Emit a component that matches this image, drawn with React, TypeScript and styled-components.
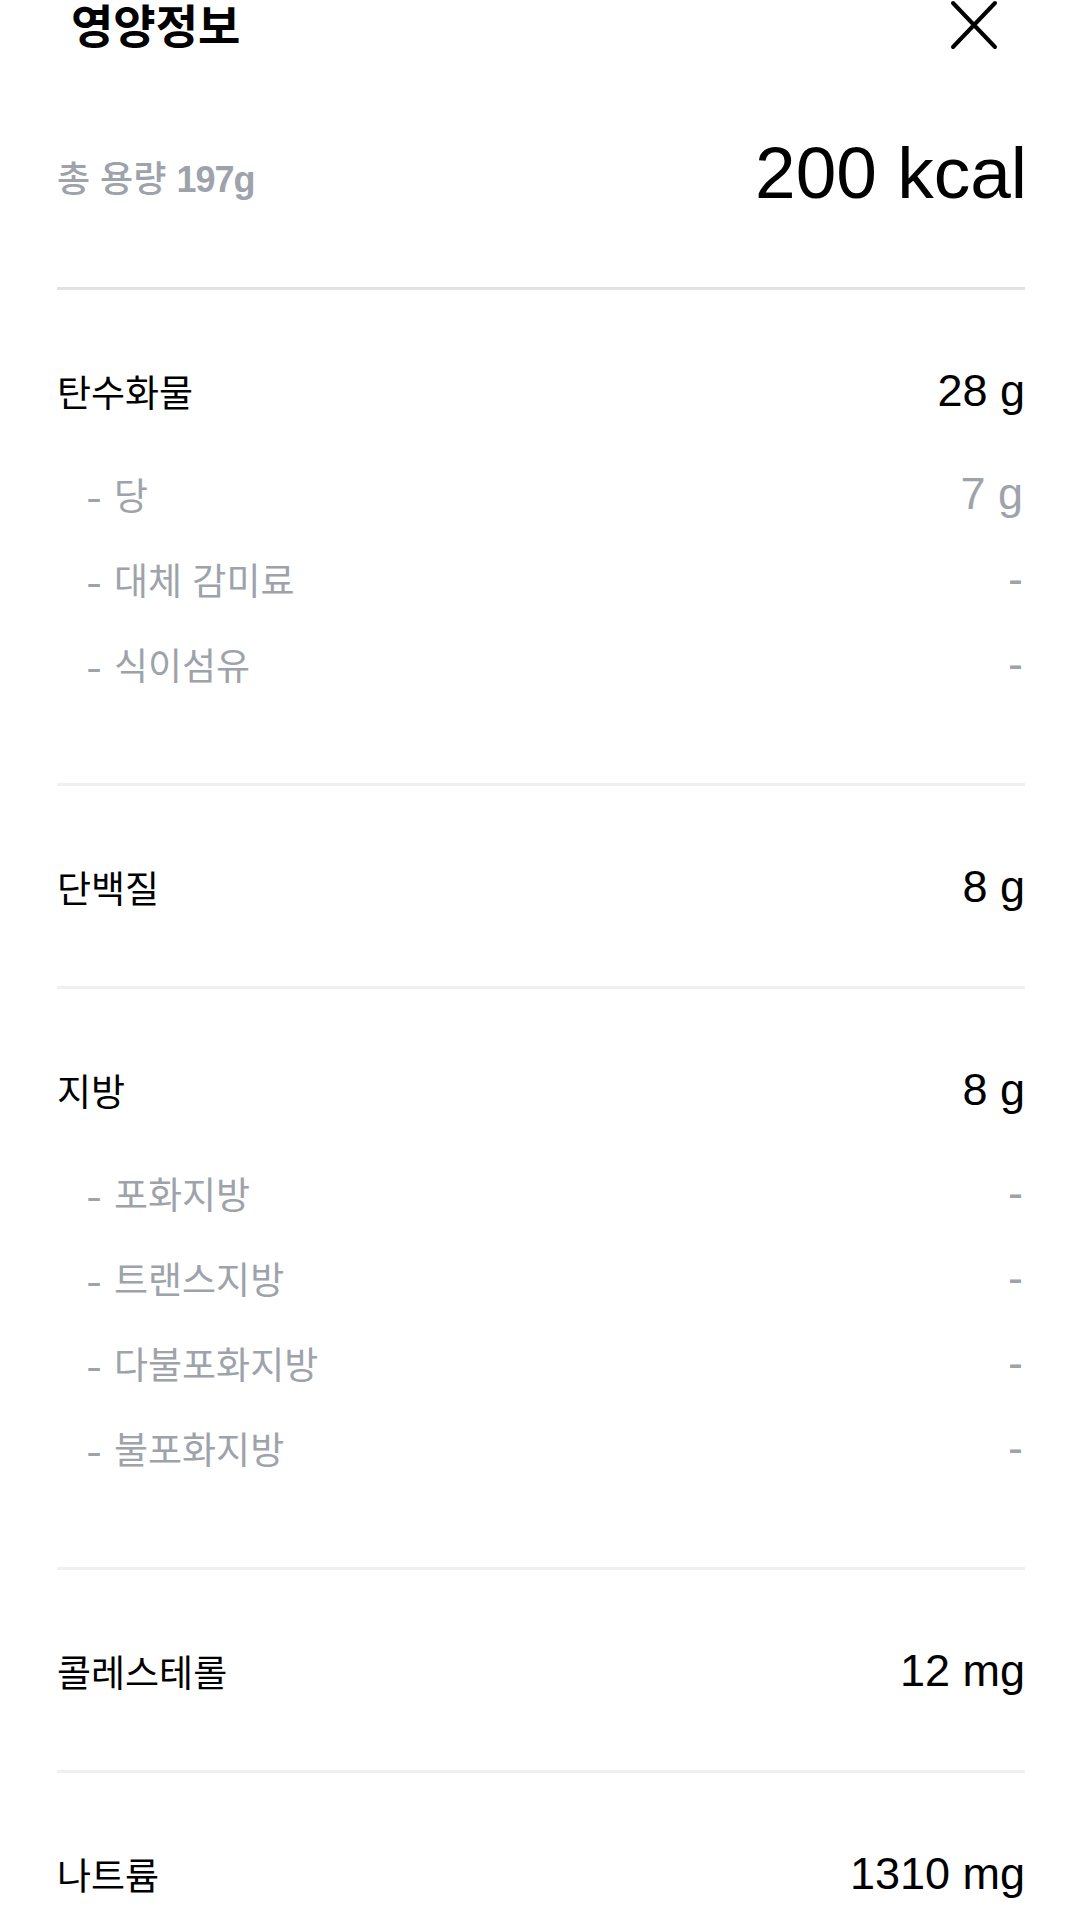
import styled, { createGlobalStyle } from "styled-components";

const GlobalStyle = createGlobalStyle`
  body {
    margin: 0;
    background: #ffffff;
    font-family: "Liberation Sans", "Noto Sans CJK KR", sans-serif;
    color: #000000;
  }
`;

const Page = styled.div`
  width: 1081px;
  display: flex;
  flex-direction: column;
`;

const Header = styled.div`
  height: 54px;
  display: flex;
  align-items: center;
  justify-content: space-between;
  padding: 0 83px 0 71px;
`;

const Title = styled.h1`
  margin: 0;
  font-size: 46px;
  line-height: 54px;
  font-weight: 700;
`;

const CloseButton = styled.button`
  width: 48px;
  height: 50px;
  padding: 0;
  border: none;
  background: none;
  display: flex;
  margin-top: -4px;
`;

const Content = styled.div`
  padding: 0 56px 0 57px;
  display: flex;
  flex-direction: column;
`;

const Summary = styled.div`
  display: flex;
  justify-content: space-between;
  align-items: flex-end;
  padding: 83px 0 78px;
`;

const TotalWeight = styled.div`
  font-size: 36px;
  line-height: 58px;
  font-weight: 500;
  color: #9ea3ab;
`;

const Grams = styled.span`
  font-weight: 700;
  letter-spacing: -1px;
`;

const Kcal = styled.div`
  font-size: 73px;
  line-height: 72px;
  margin-right: -2px;
`;

const Divider = styled.div<{ $strong?: boolean }>`
  height: 3px;
  background: ${(p) => (p.$strong ? "#dfe3e6" : "#eef0f2")};
`;

const Section = styled.div`
  padding: 41px 0 39px;
  display: flex;
  flex-direction: column;
`;

const MainRow = styled.div`
  height: 120px;
  display: flex;
  align-items: center;
  justify-content: space-between;
`;

const Label = styled.span`
  font-size: 37px;
`;

const Value = styled.span`
  font-size: 45px;
`;

const SubList = styled.div`
  display: flex;
  flex-direction: column;
  margin-bottom: 38px;
`;

const SubRow = styled.div`
  height: 85px;
  display: flex;
  align-items: center;
  justify-content: space-between;
  padding-left: 31px;
  color: #9ea3ab;
`;

const Dash = styled.span`
  display: inline-block;
  font-size: 36px;
  margin-right: 14px;
  transform: scaleX(1.3);
`;

const SubValue = styled.span`
  font-size: 45px;
  margin-right: 2px;
`;

interface INutrient {
  label: string;
  value: string;
  subs?: [string, string][];
}

const nutrients: INutrient[] = [
  {
    label: "탄수화물",
    value: "28 g",
    subs: [
      ["당", "7 g"],
      ["대체 감미료", "-"],
      ["식이섬유", "-"],
    ],
  },
  { label: "단백질", value: "8 g" },
  {
    label: "지방",
    value: "8 g",
    subs: [
      ["포화지방", "-"],
      ["트랜스지방", "-"],
      ["다불포화지방", "-"],
      ["불포화지방", "-"],
    ],
  },
  { label: "콜레스테롤", value: "12 mg" },
  { label: "나트륨", value: "1310 mg" },
];

function CloseIcon() {
  return (
    <svg width="48" height="50" viewBox="0 0 48 50" fill="none">
      <path
        d="M3 3L45 47M45 3L3 47"
        stroke="#000"
        strokeWidth="4"
        strokeLinecap="round"
      />
    </svg>
  );
}

function App() {
  return (
    <Page>
      <GlobalStyle />
      <Header>
        <Title>영양정보</Title>
        <CloseButton aria-label="닫기">
          <CloseIcon />
        </CloseButton>
      </Header>
      <Content>
        <Summary>
          <TotalWeight>
            총 용량 <Grams>197g</Grams>
          </TotalWeight>
          <Kcal>200 kcal</Kcal>
        </Summary>
        {nutrients.map((item, i) => (
          <div key={item.label}>
            <Divider $strong={i === 0} />
            <Section>
              <MainRow>
                <Label>{item.label}</Label>
                <Value>{item.value}</Value>
              </MainRow>
              {item.subs && (
                <SubList>
                  {item.subs.map(([name, amount]) => (
                    <SubRow key={name}>
                      <Label>
                        <Dash>-</Dash>
                        {name}
                      </Label>
                      <SubValue>{amount}</SubValue>
                    </SubRow>
                  ))}
                </SubList>
              )}
            </Section>
          </div>
        ))}
      </Content>
    </Page>
  );
}

export default App;
